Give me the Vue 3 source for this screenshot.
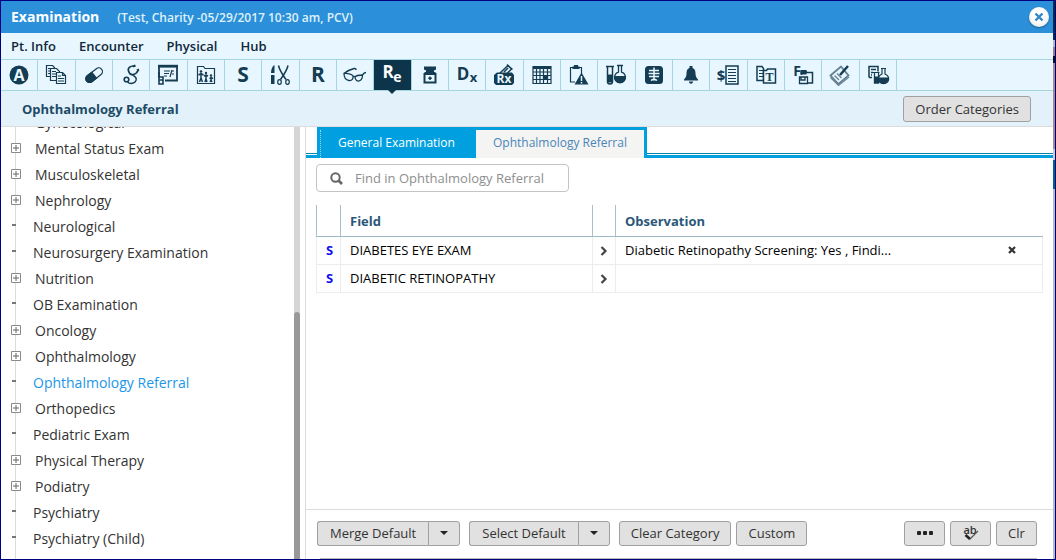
<script setup>
import { ref } from 'vue'

const menus = ['Pt. Info', 'Encounter', 'Physical', 'Hub']

const tools = [
  'Allergies', 'Notes', 'Medications', 'Stethoscope', 'Presentation', 'Family history',
  'Social history', 'Surgical history', 'ROS', 'Vision', 'Referral exam', 'Vials',
  'Diagnosis', 'Prescriptions', 'Calendar', 'Alerts', 'Labs', 'Imaging',
  'Reminders', 'Billing', 'Templates', 'Flowsheet', 'Sign off', 'Lab results'
]
const activeTool = ref(10)

const categories = [
  { name: 'Gynecological', group: true },
  { name: 'Mental Status Exam', group: true },
  { name: 'Musculoskeletal', group: true },
  { name: 'Nephrology', group: true },
  { name: 'Neurological', group: false },
  { name: 'Neurosurgery Examination', group: false },
  { name: 'Nutrition', group: true },
  { name: 'OB Examination', group: false },
  { name: 'Oncology', group: true },
  { name: 'Ophthalmology', group: true },
  { name: 'Ophthalmology Referral', group: false },
  { name: 'Orthopedics', group: true },
  { name: 'Pediatric Exam', group: false },
  { name: 'Physical Therapy', group: true },
  { name: 'Podiatry', group: true },
  { name: 'Psychiatry', group: false },
  { name: 'Psychiatry (Child)', group: false }
]
const selected = ref('Ophthalmology Referral')

const rows = ref([
  { field: 'DIABETES EYE EXAM', observation: 'Diabetic Retinopathy Screening: Yes , Findi...' },
  { field: 'DIABETIC RETINOPATHY', observation: '' }
])
const search = ref('')
</script>

<template>
  <div class="window">
    <div class="content">
      <header class="titlebar">
        <h1>Examination</h1>
        <span class="patient">(Test, Charity -05/29/2017 10:30 am, PCV)</span>
        <button class="close" aria-label="Close">
          <svg width="10" height="10" viewBox="0 0 10 10"><path d="M1.5 1.5l7 7M8.5 1.5l-7 7" stroke="#3286c4" stroke-width="2.4" /></svg>
        </button>
      </header>

      <nav class="menu">
        <a v-for="m in menus" :key="m" href="#">{{ m }}</a>
      </nav>

      <div class="toolbar">
        <div class="tools">
          <button
            v-for="(t, i) in tools"
            :key="t"
            class="tool"
            :class="{ active: i === activeTool }"
            :aria-label="t"
            @click="activeTool = i"
          >
            <svg width="24" height="24" viewBox="0 0 24 24" fill="none" stroke="currentColor" stroke-width="1.2">
              <g v-if="i === 0">
                <circle cx="12" cy="12" r="9.5" fill="currentColor" stroke="none" />
                <text x="12" y="17.500" class="glyph inv" font-size="16">A</text>
              </g>
              <g v-else-if="i === 1">
                <path d="M2.5 2.5h6l2 2v9h-8z" fill="#e8f7ff" />
                <path d="M4 5.5h4M4 8h4M4 10.500h4" />
                <path d="M6.500 5.500h6l3 3v9h-9z" fill="#e8f7ff" />
                <path d="M8 8.500h4M8 11h5M8 13.500h5" />
                <path d="M12.500 9.500h6l3 3v8h-9z" fill="#e8f7ff" />
                <path d="M18.500 9.500v3h3M14 13h3M14 15.500h6M14 18h6" />
              </g>
              <g v-else-if="i === 2" transform="rotate(-38 12 12)">
                <rect x="2.500" y="8.500" width="19" height="7.500" rx="3.700" />
                <path d="M12 8.500H6.200a3.700 3.700 0 0 0 0 7.500H12z" fill="currentColor" />
              </g>
              <g v-else-if="i === 3">
                <path d="M14.500 3C11 3 8.500 5 9.500 8c.8 2.500 2.500 4 4.500 3.500 2-.3 4-1.500 5-4" stroke-width="1.700" />
                <path d="M13.500 12c3 1.500 4.500 3 3.500 5.500-1 3-6 4-8.500 1.500" stroke-width="1.400" />
                <circle cx="7.500" cy="16.500" r="2.300" stroke-width="1.600" />
                <path d="M14 3.500l2.500-1M18 7.500l2-1" stroke-width="2.200" />
              </g>
              <g v-else-if="i === 4">
                <path d="M3 15V3.500h18v14H9" stroke-width="1.800" />
                <path d="M2 3h20" stroke-width="2.400" />
                <path d="M8 8h6M8 10.500h5M8 13h3M16 7l-2 7M18 8h-2M18 11h-2" />
                <path d="M3 9v8h4v-3H3M3 17v4h4v-4" stroke-width="1.600" />
              </g>
              <g v-else-if="i === 5">
                <path d="M3.500 20.500v-17h6l1.500 2h9.500v15z" />
                <circle cx="7" cy="8.500" r="1.300" fill="currentColor" stroke="none" />
                <circle cx="12" cy="10" r="1.200" fill="currentColor" stroke="none" />
                <circle cx="17" cy="12.500" r="1.200" fill="currentColor" stroke="none" />
                <path d="M4.500 12l2.500-1.500L9.500 12M7 10v5l-1.500 4M7 15l1.500 4M10 13l2-1 2 1M12 12v4l-1 3M12 16l1 3M15.500 15.500l1.500-1 2 1M17 14v3l-1 2M17 17l1 2" stroke-width="1.500" />
              </g>
              <text v-else-if="i === 6" x="12" y="19" class="glyph" font-size="21">S</text>
              <g v-else-if="i === 7">
                <path d="M3 10c0-4 1.500-7 3.500-8v8zM3 12h3.500v9H3z" fill="currentColor" stroke="none" />
                <path d="M10.500 2.500c1 5 4 9 7.500 14M20 2.500c-1 5-4 9-7.500 14" stroke-width="1.500" />
                <ellipse cx="11.500" cy="19" rx="1.800" ry="2.300" />
                <ellipse cx="19.500" cy="19" rx="1.800" ry="2.300" />
              </g>
              <text v-else-if="i === 8" x="12" y="19" class="glyph" font-size="21">R</text>
              <g v-else-if="i === 9">
                <path d="M1 10.500c0 4 2 6.500 5 7s4.500-2 4-4.500c-1-2-6-3-9-2.500zM12 14c0 3 2.500 5 5 3.500 2-1 2.500-3.500 2.500-5.500-2 0-6 0-7.500 2zM10 14c.5-.8 1.500-.8 2 0" stroke-width="1.300" />
                <path d="M1 10.500C4 8 9 6 11 5.500c1.500-.3 2 .5 2 1.500M19.500 12c1-1.800 2-2.500 3.500-2.500" stroke-width="1.500" />
              </g>
              <g v-else-if="i === 10">
                <text x="8" y="14.500" class="glyph" font-size="17">R</text>
                <text x="17.500" y="18.500" class="glyph" font-size="14">e</text>
              </g>
              <g v-else-if="i === 11">
                <path d="M6 3.500h12v3l-2 1V10H8V7.500l-2-1z" fill="currentColor" stroke="none" />
                <path d="M7 9h10l1.500 1.500v10h-13v-10z" fill="currentColor" stroke="none" />
                <path d="M7.500 12h9v6.500h-9z" fill="#e8f7ff" stroke="none" />
                <path d="M12 13.500v3.500M10.200 15.200h3.600" stroke-width="1.500" />
              </g>
              <g v-else-if="i === 12">
                <text x="8" y="17" class="glyph" font-size="17">D</text>
                <text x="18.500" y="19" class="glyph" font-size="13">x</text>
              </g>
              <g v-else-if="i === 13">
                <path d="M8 10L16 2.500l3.500 3.500-4 4M12 9l4-4M15 1.500l5.500 5" stroke-width="1.500" />
                <path d="M2 12l3-2.500h15L22 12v8l-2 2H4l-2-2z" fill="currentColor" stroke="none" />
                <text x="12" y="20" class="glyph inv" font-size="12">Rx</text>
              </g>
              <g v-else-if="i === 14">
                <path d="M3 3.500h18v17H3z" />
                <path d="M3 4.500h18" stroke-width="3" />
                <path d="M6.500 5v15M10 5v15M13.500 5v15M17.500 5v15M3 9h18M3 12.500h18M3 16.500h18" />
                <path d="M13.500 12.500h4v4h-4z" fill="currentColor" />
              </g>
              <g v-else-if="i === 15">
                <path d="M8 19H3.500V4.500h11V11" />
                <path d="M6 5.500V4h1.500V2.500h3V4H12v1.500z" fill="currentColor" />
                <path d="M14.500 9.500L21.500 21.500h-14z" fill="currentColor" stroke="none" />
                <path d="M14.500 13v5M14.500 19v1.500" stroke="#e8f7ff" stroke-width="1.500" />
              </g>
              <g v-else-if="i === 16">
                <path d="M2 3.500h8M3.500 4v14.500a2.500 2.500 0 0 0 5 0V4" stroke-width="1.500" />
                <path d="M4 12h4v7H4z" fill="currentColor" />
                <path d="M13 2.500h6M14.500 3v6a5.500 5.500 0 1 0 3 0V3" stroke-width="1.300" />
                <path d="M10.500 13.500h11c0 8-11 8-11 0z" fill="currentColor" />
              </g>
              <g v-else-if="i === 17">
                <rect x="3" y="3" width="18" height="18" rx="3.500" fill="currentColor" stroke="none" />
                <path d="M12 4.500v13M7 7.500h10M6.500 10.500h11M7 13.500h10M9 17.500c2-1.500 4-1.500 6 0" stroke="#e8f7ff" stroke-width="1.500" />
              </g>
              <path v-else-if="i === 18" d="M10.500 5V3h3v2c2.300.6 3 3 3 5.500 0 3 1 4.500 2.500 6v1H5v-1c1.500-1.500 2.500-3 2.500-6 0-2.500.7-4.900 3-5.500zM10 18.500h4c0 3-4 3-4 0z" fill="currentColor" stroke="none" />
              <g v-else-if="i === 19">
                <text x="5" y="18" class="glyph" font-size="15">$</text>
                <path d="M10 3h12v18H10z" stroke-width="1.500" />
                <path d="M12 6.500h8M12 9.500h8M12 12.500h8M12 15.500h8M12 18.500h8" />
              </g>
              <g v-else-if="i === 20">
                <path d="M10 17.500H3v-14h5l1.500 2V17" stroke-width="1.500" />
                <path d="M5 7.500h4M5 10.500h4M5 13.500h4" />
                <path d="M9.500 7.500h3l1-1.500h8v14h-12z" fill="#e8f7ff" stroke-width="1.500" />
                <text x="15.500" y="18" class="glyph serif" font-size="12">T</text>
              </g>
              <g v-else-if="i === 21">
                <text x="6" y="13" class="glyph" font-size="14">F</text>
                <path d="M10.500 8h4l1 1.500h6V20h-5M10.500 8v4" stroke-width="1.500" />
                <path d="M10 7.500h5v3.500h-5z" fill="currentColor" />
                <path d="M8.500 14h8v6.500h-8zM10 14v3h4v-3" fill="#e8f7ff" stroke-width="1.300" />
              </g>
              <g v-else-if="i === 22" class="muted">
                <path d="M2.500 12.500L13 3.500l7.500 9L10.500 21z" stroke-width="1.800" />
                <path d="M2.500 14.500l8 8L21 14M6.500 12.500l4.500 4.500M9 10.500l4.500 4.500" />
                <path d="M20 3l-8 9" stroke="#143c52" stroke-width="2.500" />
              </g>
              <g v-else>
                <path d="M3 14.500v-11h9v5M3 14.500h3" stroke-width="1.500" />
                <path d="M5 6.500h5M5 9.500h2M5 12h1" stroke-width="1.500" />
                <path d="M6.500 9.500h7M8.500 10v10h4V10" />
                <path d="M8.500 14h4v6h-4z" fill="currentColor" />
                <path d="M15 5.500h5M16 6v5c-6 3-4 9.500 1.500 9.500s7.500-6.500 1.500-9.500V6" />
                <path d="M13 15h9c0 7.500-9 7.500-9 0z" fill="currentColor" />
              </g>
            </svg>
          </button>
        </div>
      </div>

      <div class="subbar">
        <h2>Ophthalmology Referral</h2>
        <button class="btn tall">Order Categories</button>
      </div>

      <div class="body">
        <aside class="sidebar">
          <ul class="tree">
            <li v-for="c in categories" :key="c.name">
              <button v-if="c.group" class="expander" :aria-label="'Expand ' + c.name">
                <svg width="10" height="10" viewBox="0 0 10 10"><path d="M.5.5h9v9h-9z" fill="#fff" stroke="#8a8a8a" /><path d="M2 5h6M5 2v6" stroke="#666" /></svg>
              </button>
              <span v-else class="dash"></span>
              <a href="#" :class="{ current: c.name === selected }" @click.prevent="selected = c.name">{{ c.name }}</a>
            </li>
          </ul>
          <div class="scrollbar"><div class="thumb"></div></div>
        </aside>

        <main class="main">
          <div class="tabs">
            <div class="tabset">
              <button class="tab">General Examination</button>
              <button class="tab open">Ophthalmology Referral</button>
            </div>
          </div>

          <div class="pane">
            <label class="search">
              <svg width="13" height="13" viewBox="0 0 13 13" fill="none" stroke="#666"><circle cx="5.500" cy="5.500" r="4.200" stroke-width="2" /><path d="M8.500 8.500l3.500 3.500" stroke-width="2.600" /></svg>
              <input v-model="search" type="text" aria-label="Find" placeholder="Find in Ophthalmology Referral" />
            </label>

            <table>
              <colgroup>
                <col class="c-flag" /><col class="c-field" /><col class="c-go" /><col />
              </colgroup>
              <thead>
                <tr><th></th><th>Field</th><th></th><th>Observation</th></tr>
              </thead>
              <tbody>
                <tr v-for="r in rows" :key="r.field">
                  <td class="flag">S</td>
                  <td>{{ r.field }}</td>
                  <td class="go">
                    <button class="plain" :aria-label="'Open ' + r.field">
                      <svg width="8" height="10" viewBox="0 0 8 10" fill="none"><path d="M1.500 1l4 4-4 4" stroke="#444" stroke-width="2.200" /></svg>
                    </button>
                  </td>
                  <td>
                    <div class="obs">
                      <span>{{ r.observation }}</span>
                      <button v-if="r.observation" class="plain" aria-label="Remove" @click="r.observation = ''">
                        <svg width="8" height="8" viewBox="0 0 8 8"><path d="M1 1l6 6M7 1L1 7" stroke="#333" stroke-width="2.200" /></svg>
                      </button>
                    </div>
                  </td>
                </tr>
              </tbody>
            </table>
          </div>

          <footer class="actions">
            <div class="split">
              <button class="btn">Merge Default</button>
              <button class="btn drop" aria-label="Merge options"><span class="caret"></span></button>
            </div>
            <div class="split">
              <button class="btn">Select Default</button>
              <button class="btn drop" aria-label="Select options"><span class="caret"></span></button>
            </div>
            <div class="pair">
              <button class="btn">Clear Category</button>
              <button class="btn">Custom</button>
            </div>
            <div class="right">
              <button class="btn small" aria-label="More">
                <svg width="16" height="4" viewBox="0 0 16 4" fill="#222"><rect x="0" width="4" height="4" rx="1" /><rect x="6" width="4" height="4" rx="1" /><rect x="12" width="4" height="4" rx="1" /></svg>
              </button>
              <button class="btn small" aria-label="Spell check">
                <svg width="16" height="16" viewBox="0 0 16 16" fill="none"><text x="7" y="9" class="spell">ab</text><path d="M2.500 10l4.500 4" stroke="#222" stroke-width="2.600" /><path d="M6.500 14.500L15 6" stroke="#555" stroke-width="1.300" /></svg>
              </button>
              <button class="btn small">Clr</button>
            </div>
          </footer>
          <div class="next-row"></div>
        </main>
      </div>
    </div>
    <div class="edge"></div>
  </div>
</template>

<style>
body {
  margin: 0;
  background: #fff;
}
</style>

<style scoped>
* {
  box-sizing: border-box;
}
.window {
  display: flex;
  height: 100vh;
  border: 1px solid #000080;
  background: #fff;
  color: #333;
  font-family: "Open Sans", "Noto Sans", sans-serif;
  font-size: 13px;
  overflow: hidden;
}
button {
  font: inherit;
  color: inherit;
  padding: 0;
  border: 0;
  background: none;
  cursor: pointer;
}
svg {
  overflow: visible;
}
a {
  color: inherit;
  text-decoration: none;
}
.content {
  flex: 1;
  min-width: 0;
  display: flex;
  flex-direction: column;
}
.edge {
  width: 2px;
  background: linear-gradient(#082c40 0 39px, #bbb 39px 46px, #987f84 46px 55px, #111 55px 62px, #a58b90 62px 148px, #ccc 148px 159px, #006680 159px 188px, #b8bcc0 188px);
}
.titlebar {
  display: flex;
  align-items: center;
  gap: 18px;
  height: 32px;
  flex: none;
  padding: 0 4px 0 10px;
  background: #2b90d9;
  color: #fff;
}
h1 {
  margin: 0;
  font-size: 14px;
  font-weight: 700;
  line-height: 20px;
}
.patient {
  font-size: 12px;
  font-weight: 600;
  line-height: 20px;
  padding-top: 2px;
  color: #dff0fc;
}
.close {
  display: flex;
  align-items: center;
  justify-content: center;
  width: 20px;
  height: 20px;
  margin-left: auto;
  border-radius: 50%;
  background: radial-gradient(circle at 50% 40%, #fff 40%, #ddd);
  box-shadow: 0 1px 2px #1c5c8c;
}
.menu {
  display: flex;
  align-items: center;
  gap: 23px;
  height: 27px;
  flex: none;
  padding: 0 10px;
  background: #e8f7ff;
  border-bottom: 1px solid #a5d6df;
  color: #10283a;
  font-weight: 600;
}
.toolbar {
  flex: none;
  height: 31px;
  background: #e8f7ff;
  border-bottom: 1px solid #a5d6df;
}
.tools {
  display: flex;
  max-width: 896px;
  height: 30px;
}
.tool {
  position: relative;
  flex: 1;
  display: flex;
  align-items: center;
  justify-content: center;
  border-right: 1px solid #a5d6df;
  color: #143c52;
}
.tool.active {
  background: #0c344a;
  color: #fff;
}
.tool.active::after {
  content: "";
  position: absolute;
  top: 100%;
  left: 50%;
  margin-left: -4px;
  border: 4px solid transparent;
  border-top-color: #0c344a;
  border-bottom: 0;
}
.muted {
  stroke: #668190;
}
.glyph {
  font-family: "Open Sans", sans-serif;
  font-weight: 700;
  fill: currentColor;
  stroke: none;
  text-anchor: middle;
}
.glyph.inv {
  fill: #e8f7ff;
}
.glyph.serif {
  font-family: "Liberation Serif", serif;
}
.subbar {
  display: flex;
  align-items: center;
  justify-content: space-between;
  height: 36px;
  flex: none;
  padding: 0 22px 0 21px;
  background: #e3f2fa;
  border-bottom: 1px solid #dcdcdc;
}
h2 {
  margin: 0;
  font-size: 13px;
  font-weight: 700;
  color: #1d4a66;
}
.btn {
  display: flex;
  align-items: center;
  justify-content: center;
  height: 25px;
  padding: 0 11px;
  border: 1px solid #a0a0a0;
  border-radius: 3px;
  background: #e1e1e1;
  color: #333;
  white-space: nowrap;
}
.btn.tall {
  height: 26px;
}
.body {
  flex: 1;
  min-height: 0;
  display: flex;
}
.sidebar {
  display: flex;
  width: 305px;
  flex: none;
  padding-right: 5px;
  border-right: 1px solid #dcdcdc;
  overflow: hidden;
}
.tree {
  flex: 1;
  margin: -18px 0 0;
  padding: 0;
  list-style: none;
  font-size: 14px;
  background: linear-gradient(#dcdcdc, #dcdcdc) 14px 0 / 1px 100% no-repeat;
}
.tree li {
  display: flex;
  align-items: center;
  height: 26px;
}
.expander {
  display: flex;
  width: 10px;
  margin: 0 14px 0 10px;
}
.dash {
  width: 4px;
  height: 2px;
  margin: 0 17px 2px 11px;
  background: #777;
}
.current {
  color: #2196e8;
}
.scrollbar {
  width: 6px;
  background: #d5d5d5;
}
.thumb {
  height: 100%;
  margin-top: 185px;
  border-radius: 3px 3px 0 0;
  background: #999;
}
.main {
  flex: 1;
  min-width: 0;
  display: flex;
  flex-direction: column;
}
.tabs {
  flex: none;
  height: 31px;
  padding-left: 11px;
  background: linear-gradient(transparent 26px, #0083a8 26px 27px, #fff 27px 28px, #009fe0 28px);
}
.tabset {
  display: flex;
  width: max-content;
  height: 31px;
  padding: 3px 3px 0 3px;
  background: #009fe0;
}
.tab {
  padding: 0 17px 3px;
  color: #fff;
  font-size: 12px;
  font-weight: 500;
}
.tab:first-child {
  padding: 0 21px 3px 17px;
  border-left: 1px dotted #9bd8f3;
}
.tab.open {
  background: #f4f4f2;
  color: #4a86b8;
  font-weight: 400;
}
.pane {
  flex: 1;
  padding: 6px 10px 0 10px;
}
.search {
  display: flex;
  align-items: center;
  gap: 12px;
  width: 253px;
  height: 28px;
  padding: 0 13px;
  border: 1px solid #c4c4c4;
  border-radius: 4px;
}
.search svg {
  flex: none;
}
.search input {
  flex: 1;
  min-width: 0;
  padding: 0;
  border: 0;
  outline: 0;
  background: none;
  font: inherit;
  color: #333;
}
.search input::placeholder {
  color: #8e8e8e;
  opacity: 1;
}
table {
  width: 100%;
  margin-top: 13px;
  table-layout: fixed;
  border-collapse: separate;
  border-spacing: 0;
  color: #000;
  font-size: 13px;
}
.c-flag {
  width: 25px;
}
.c-field {
  width: 252px;
}
.c-go {
  width: 23px;
}
th {
  height: 32px;
  padding: 0 9px;
  border-right: 1px solid #a8c0cc;
  border-bottom: 1px solid #9db8c6;
  text-align: left;
  font-weight: 700;
  color: #2a5878;
}
th:first-child {
  border-left: 1px solid #a8c0cc;
}
th:last-child {
  border-right: 0;
}
td {
  height: 28px;
  padding: 0 9px 2px;
  border-right: 1px solid #ececec;
  border-bottom: 1px solid #ececec;
}
td:first-child {
  border-left: 1px solid #ececec;
}
.flag {
  color: #1010f0;
  font-weight: 700;
}
td.go {
  padding: 0 7px;
}
.plain {
  display: flex;
}
.obs {
  display: flex;
  align-items: center;
  justify-content: space-between;
  padding-right: 17px;
}
.actions {
  display: flex;
  align-items: center;
  gap: 9px;
  flex: none;
  height: 49px;
  padding: 0 16px 2px 11px;
  border-top: 1px solid #dcdcdc;
}
.split,
.pair,
.right {
  display: flex;
}
.split .btn:first-child {
  padding: 0 12px;
  border-radius: 3px 0 0 3px;
  border-right: 0;
}
.split .btn.drop {
  width: 32px;
  padding: 0;
  border-radius: 0 3px 3px 0;
}
.caret {
  border: 4px solid transparent;
  border-top-color: #222;
  border-bottom: 0;
}
.pair {
  gap: 5px;
}
.right {
  gap: 5px;
  margin-left: auto;
}
.btn.small {
  width: 41px;
  padding: 0;
}
.spell {
  fill: #333;
  font-family: "Open Sans", sans-serif;
  font-size: 11px;
  font-weight: 600;
  text-anchor: middle;
}
.next-row {
  flex: none;
  height: 1px;
  margin: 0 16px 0 14px;
  background: #bbb;
}
</style>
